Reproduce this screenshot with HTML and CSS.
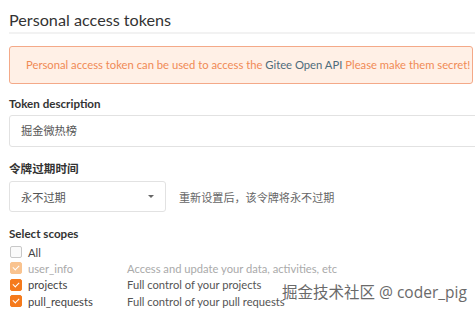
FILE: index.html
```html
<!DOCTYPE html>
<html lang="en">
<head>
    <meta charset="UTF-8">
    <meta name="viewport" content="width=device-width, initial-scale=1.0">
    <title>Personal access tokens</title>
    <link rel="stylesheet" href="styles.css">
</head>
<body>
    <div class="token-page">
        <h2 class="page-title">Personal access tokens</h2>

        <div class="alert">
            Personal access token can be used to access the <a href="#" class="alert-link">Gitee Open API</a> Please make them secret!
        </div>

        <div class="field">
            <label class="field-label">Token description</label>
            <div class="text-input">掘金微热榜</div>
        </div>

        <div class="field">
            <label class="field-label">令牌过期时间</label>
            <div class="expire-row">
                <div class="select-box">
                    <span>永不过期</span>
                    <span class="caret"></span>
                </div>
                <span class="expire-hint">重新设置后，该令牌将永不过期</span>
            </div>
        </div>

        <div class="field scopes">
            <label class="field-label">Select scopes</label>
            <div class="scope-row">
                <span class="check"></span>
                <span class="scope-name">All</span>
            </div>
            <div class="scope-row disabled">
                <span class="check checked"></span>
                <span class="scope-name">user_info</span>
                <span class="scope-desc">Access and update your data, activities, etc</span>
            </div>
            <div class="scope-row">
                <span class="check checked"></span>
                <span class="scope-name">projects</span>
                <span class="scope-desc">Full control of your projects</span>
            </div>
            <div class="scope-row">
                <span class="check checked"></span>
                <span class="scope-name">pull_requests</span>
                <span class="scope-desc">Full control of your pull requests</span>
            </div>
        </div>
    </div>

    <div class="watermark">掘金技术社区 @ coder_pig</div>
</body>
</html>
```

FILE: styles.css
```css
body {
    margin: 0;
    height: 311px;
    font-family: Lato, "Noto Sans CJK SC", sans-serif;
    color: #333;
    background: #fff;
    overflow: hidden;
}

.token-page {
    padding-left: 9px;
    overflow: hidden;
}

.page-title {
    margin: 0;
    padding: 10px 0 2px;
    font-size: 16.2px;
    line-height: 20px;
    font-weight: 400;
    color: #333;
    border-bottom: 2px solid #f2f2f2;
}

.alert {
    margin: 12px 2px 0 0;
    height: 36px;
    line-height: 36px;
    padding-left: 16px;
    border: 1px solid #f4a988;
    border-radius: 3px;
    background: #fff0e6;
    color: #f08a55;
    font-size: 11.25px;
    white-space: nowrap;
}

.alert-link {
    color: #4e6b7a;
    text-decoration: none;
}

.field {
    margin-top: 12px;
}

.field-label {
    display: block;
    font-size: 11.6px;
    font-weight: 700;
    color: #333;
    line-height: 16px;
}

.text-input {
    margin: 3px -10px 0 0;
    height: 30px;
    line-height: 30px;
    padding-left: 11px;
    border: 1px solid #e2e2e2;
    border-radius: 3px;
    font-size: 11.2px;
    color: #555;
}

.field + .field {
    margin-top: 14px;
}

.expire-row {
    display: flex;
    align-items: center;
    gap: 13px;
    margin-top: 4px;
}

.select-box {
    width: 133px;
    height: 29px;
    padding: 0 11px;
    border: 1px solid #e2e2e2;
    border-radius: 3px;
    display: flex;
    align-items: center;
    justify-content: space-between;
    font-size: 11.2px;
    color: #555;
}

.caret {
    width: 0;
    height: 0;
    border-left: 3px solid transparent;
    border-right: 3px solid transparent;
    border-top: 3px solid #666;
}

.expire-hint {
    font-size: 11.1px;
    color: #666;
}

.scopes .field-label {
    margin-bottom: 2px;
}

.scope-row {
    display: flex;
    align-items: center;
    height: 16.3px;
    font-size: 11.2px;
    color: #444;
}

.check {
    width: 12px;
    height: 12px;
    margin: 0 6px 0 1px;
    border: 1px solid #c8c8c8;
    border-radius: 2px;
    background: #fafafa;
    position: relative;
    box-sizing: border-box;
}

.check.checked {
    background: #f57a1c;
    border-color: #f57a1c;
}

.check.checked::after {
    content: "";
    position: absolute;
    left: 3px;
    top: 1px;
    width: 3px;
    height: 5px;
    border: solid #fff;
    border-width: 0 1.5px 1.5px 0;
    transform: rotate(45deg);
}

.scope-row.disabled {
    color: #aaa;
}

.scope-row.disabled .check {
    background: #f9c38f;
    border-color: #f9c38f;
}

.scope-name {
    width: 99px;
}

.scope-desc {
    color: #555;
}

.scope-row.disabled .scope-desc {
    color: #aaa;
}

.watermark {
    position: absolute;
    left: 282px;
    top: 280px;
    font-size: 15.5px;
    white-space: nowrap;
    font-family: "Open Sans", "Noto Sans CJK SC", sans-serif;
    color: #6a6a6a;
    text-shadow: 0 0 2px #fff, 0 0 2px #fff;
}
```
